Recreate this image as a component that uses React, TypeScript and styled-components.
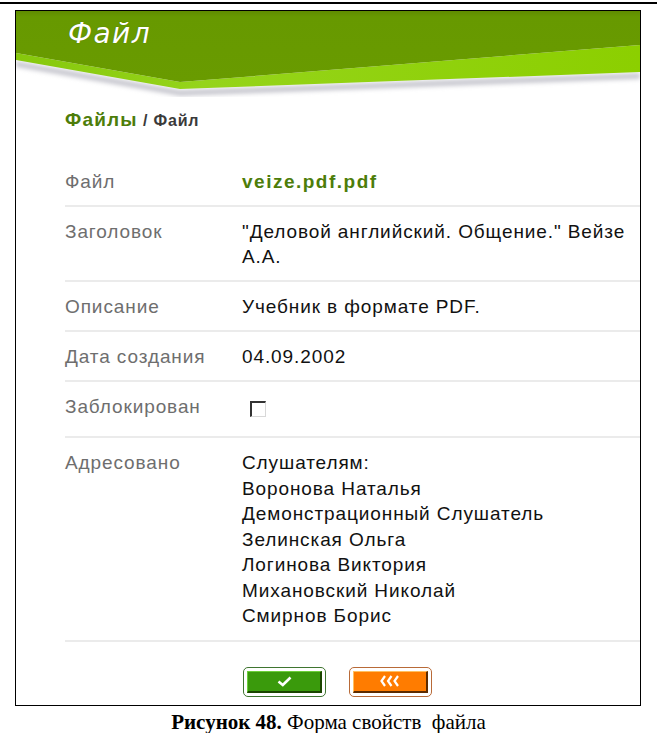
import styled, { createGlobalStyle } from "styled-components";

const GlobalStyle = createGlobalStyle`
  body {
    margin: 0;
    background: #ffffff;
    font-family: "Liberation Sans", Arial, sans-serif;
  }
`;

const recipients = [
  "Слушателям:",
  "Воронова Наталья",
  "Демонстрационный Слушатель",
  "Зелинская Ольга",
  "Логинова Виктория",
  "Михановский Николай",
  "Смирнов Борис",
];

export default function App() {
  return (
    <Page>
      <GlobalStyle />
      <TopRule />
      <Frame>
        <Header>
          <HeaderArt viewBox="0 0 624 86" preserveAspectRatio="none">
            <defs>
              <linearGradient id="band" x1="0" y1="0" x2="1" y2="0">
                <stop offset="0" stopColor="#86c80c" />
                <stop offset="0.3" stopColor="#95d41a" />
                <stop offset="1" stopColor="#8ccf00" />
              </linearGradient>
              <linearGradient id="dark" x1="0" y1="0" x2="0" y2="1">
                <stop offset="0" stopColor="#5f8c00" />
                <stop offset="0.08" stopColor="#679900" />
                <stop offset="1" stopColor="#699b00" />
              </linearGradient>
              <filter id="soft" x="-5%" y="-50%" width="110%" height="200%">
                <feGaussianBlur stdDeviation="2" />
              </filter>
            </defs>
            <polygon points="0,50 164,79 624,62 624,68 164,85 0,56" fill="#c9c9d0" filter="url(#soft)" />
            <polygon points="0,42 164,71 624,34 624,61 164,78 0,49" fill="url(#band)" />
            <polygon points="0,0 624,0 624,34 164,71 0,42" fill="url(#dark)" />
          </HeaderArt>
          <Title>Файл</Title>
        </Header>

        <Content>
          <Crumbs>
            <CrumbLink>Файлы</CrumbLink>
            <CrumbCurrent> / Файл</CrumbCurrent>
          </Crumbs>

          <Rows>
            <Row>
              <Label>Файл</Label>
              <FileName>veize.pdf.pdf</FileName>
            </Row>
            <Row>
              <Label>Заголовок</Label>
              <Value>"Деловой английский. Общение." Вейзе А.А.</Value>
            </Row>
            <Row>
              <Label>Описание</Label>
              <Value>Учебник в формате PDF.</Value>
            </Row>
            <Row>
              <Label>Дата создания</Label>
              <Value>04.09.2002</Value>
            </Row>
            <Row $extra={6}>
              <Label>Заблокирован</Label>
              <Value>
                <Checkbox />
              </Value>
            </Row>
            <Row>
              <Label>Адресовано</Label>
              <List>
                {recipients.map((name) => (
                  <div key={name}>{name}</div>
                ))}
              </List>
            </Row>
          </Rows>

          <Buttons>
            <Button $tone="green">
              <ButtonFace $tone="green">
                <svg width="15" height="11" viewBox="0 0 15 11">
                  <polyline points="1.5,5.5 5.8,9 13.5,1.5" fill="none" stroke="#fff" strokeWidth="2.6" />
                </svg>
              </ButtonFace>
            </Button>
            <Button $tone="orange">
              <ButtonFace $tone="orange">
                <svg width="22" height="12" viewBox="0 0 22 12">
                  <polyline points="6,1 2.5,6 6,11" fill="none" stroke="#fff" strokeWidth="2.2" />
                  <polyline points="12.5,1 9,6 12.5,11" fill="none" stroke="#fff" strokeWidth="2.2" />
                  <polyline points="19,1 15.5,6 19,11" fill="none" stroke="#fff" strokeWidth="2.2" />
                </svg>
              </ButtonFace>
            </Button>
          </Buttons>
        </Content>
      </Frame>
      <Caption>
        <b>Рисунок 48.</b> Форма свойств&nbsp; файла
      </Caption>
    </Page>
  );
}

const Page = styled.div`
  width: 657px;
  padding-top: 2px;
`;

const TopRule = styled.div`
  height: 2px;
  background: #000;
`;

const Frame = styled.div`
  margin: 6px 16px 0 15px;
  border: 1px solid #000;
`;

const Header = styled.div`
  position: relative;
  height: 86px;
`;

const HeaderArt = styled.svg`
  position: absolute;
  inset: 0;
  width: 100%;
  height: 100%;
  display: block;
`;

const Title = styled.h1`
  position: relative;
  margin: 0;
  padding: 6px 0 0 52px;
  font-family: "DejaVu Sans", Verdana, sans-serif;
  font-style: italic;
  font-weight: normal;
  font-size: 28px;
  line-height: 34px;
  letter-spacing: 1.4px;
  color: #ffffff;
  text-shadow: 0 0 1px #4a6a00;
`;

const Content = styled.div`
  padding: 0 0 8px 49px;
`;

const Crumbs = styled.div`
  margin-top: 13px;
  line-height: 20px;
  font-weight: bold;
`;

const CrumbLink = styled.span`
  font-size: 19px;
  letter-spacing: 1.2px;
  color: #4d7d0a;
`;

const CrumbCurrent = styled.span`
  font-size: 16px;
  letter-spacing: 0.8px;
  color: #3a3a3a;
`;

const Rows = styled.div`
  margin-top: 26px;
`;

const Row = styled.div<{ $extra?: number }>`
  display: grid;
  grid-template-columns: 177px 1fr;
  padding: 12px 0 ${(p) => 11 + (p.$extra ?? 0)}px;
  border-bottom: 2px solid #ebebeb;
  font-size: 19px;
  line-height: 25px;
  letter-spacing: 0.9px;
`;

const Label = styled.div`
  color: #6e6e6e;
`;

const Value = styled.div`
  color: #111;
`;

const List = styled.div`
  color: #111;
  line-height: 25.5px;
`;

const FileName = styled.div`
  color: #4d7d0a;
  font-weight: bold;
  letter-spacing: 1.5px;
`;

const Checkbox = styled.span`
  display: inline-block;
  box-sizing: border-box;
  width: 16px;
  height: 16px;
  margin: 7px 0 0 8px;
  vertical-align: top;
  background: #fff;
  border-top: 2px solid #333;
  border-left: 2px solid #333;
  border-right: 1px solid #d8d8d8;
  border-bottom: 1px solid #d8d8d8;
`;

const Buttons = styled.div`
  display: flex;
  gap: 23px;
  padding: 25px 0 0 178px;
`;

const tones = {
  green: { ring: "#3f7530", fill: "#3a9a0c", light: "#6ccf3a", dark: "#1b4500" },
  orange: { ring: "#b86a38", fill: "#ff7c00", light: "#ffc060", dark: "#5c2b00" },
};

const Button = styled.button<{ $tone: "green" | "orange" }>`
  box-sizing: border-box;
  width: 83px;
  height: 30px;
  padding: 3px;
  background: #fff;
  border: 1px solid ${(p) => tones[p.$tone].ring};
  border-radius: 5px;
  cursor: pointer;
  display: flex;
`;

const ButtonFace = styled.span<{ $tone: "green" | "orange" }>`
  flex: 1;
  display: flex;
  align-items: center;
  justify-content: center;
  background: ${(p) => tones[p.$tone].fill};
  border-top: 1px solid ${(p) => tones[p.$tone].light};
  border-left: 1px solid ${(p) => tones[p.$tone].light};
  border-right: 2px solid ${(p) => tones[p.$tone].dark};
  border-bottom: 2px solid ${(p) => tones[p.$tone].dark};
`;

const Caption = styled.div`
  margin-top: 5px;
  text-align: center;
  font-family: "Liberation Serif", "Times New Roman", serif;
  font-size: 21px;
  line-height: 22px;
  color: #000;
`;
